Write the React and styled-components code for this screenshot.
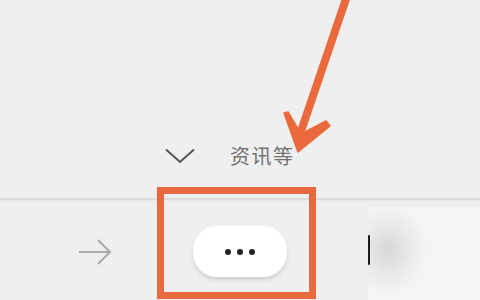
import React from "react";
import styled, { createGlobalStyle } from "styled-components";

const Global = createGlobalStyle`
  html, body { margin: 0; padding: 0; }
  body {
    background: #efefef;
    font-family: "Noto Sans CJK SC", "Noto Sans", sans-serif;
    width: 480px;
    height: 300px;
    overflow: hidden;
  }
`;

const Page = styled.div`
  position: relative;
  width: 480px;
  height: 300px;
  display: flex;
  flex-direction: column;
  background: #efefef;
  overflow: hidden;
`;

const Upper = styled.div`
  height: 198px;
  display: flex;
  flex-direction: column;
  justify-content: flex-end;
  padding-bottom: 31px;
  box-sizing: border-box;
`;

const ExpandRow = styled.div`
  display: flex;
  align-items: center;
  gap: 35px;
  padding-left: 165px;
`;

const Label = styled.span`
  font-size: 20px;
  line-height: 22px;
  color: #727272;
  letter-spacing: 1.5px;
`;

const Divider = styled.div`
  height: 2px;
  background: #dddddd;
  box-shadow: 0 1px 2px rgba(0, 0, 0, 0.04);
`;

const Toolbar = styled.div`
  flex: 1;
  display: flex;
  align-items: center;
  padding-left: 78px;
  padding-top: 3px;
  box-sizing: border-box;
`;

const IconSlot = styled.div`
  display: flex;
  width: 34px;
  height: 32px;
`;

const MoreButton = styled.div`
  margin-left: 81px;
  width: 94px;
  height: 51px;
  border-radius: 24px;
  background: #ffffff;
  box-shadow: 0 3px 4px rgba(0, 0, 0, 0.13);
  display: flex;
  align-items: center;
  justify-content: center;
  gap: 6px;
`;

const Dot = styled.span`
  width: 6px;
  height: 6px;
  border-radius: 50%;
  background: #222;
`;

const SidePanel = styled.div`
  margin-left: auto;
  align-self: stretch;
  margin-top: 4px;
  width: 112px;
  display: flex;
  align-items: center;
  background: radial-gradient(ellipse 40px 45px at 20px 46%, #d6d6d6 0px, #e9e9e9 55%, #f4f4f4 100%), #f4f4f4;
`;

const Cursor = styled.span`
  width: 2px;
  height: 30px;
  margin-top: -8px;
  background: #1a1a1a;
  border-radius: 1px;
`;

const Overlay = styled.svg`
  position: absolute;
  inset: 0;
  pointer-events: none;
`;

const HighlightBox = styled.div`
  position: absolute;
  left: 157px;
  top: 187px;
  width: 159px;
  height: 112px;
  box-sizing: border-box;
  border: 7px solid #e8683f;
  pointer-events: none;
`;

export default function App() {
  return (
    <Page>
      <Global />
      <Upper>
        <ExpandRow>
          <svg width="30" height="16" viewBox="0 0 30 16">
            <polyline points="1,1.5 15,14 29,1.5" fill="none" stroke="#555" strokeWidth="2" />
          </svg>
          <Label>资讯等</Label>
        </ExpandRow>
      </Upper>
      <Divider />
      <Toolbar>
        <IconSlot>
          <svg width="34" height="32" viewBox="0 0 34 32">
            <line x1="1" y1="16" x2="32" y2="16" stroke="#aaa" strokeWidth="2" />
            <polyline points="20,4 32,16 20,28" fill="none" stroke="#aaa" strokeWidth="2" />
          </svg>
        </IconSlot>
        <MoreButton>
          <Dot />
          <Dot />
          <Dot />
        </MoreButton>
        <SidePanel>
          <Cursor />
        </SidePanel>
      </Toolbar>
      <HighlightBox />
      <Overlay width="480" height="300" viewBox="0 0 480 300">
        <line x1="347" y1="-4" x2="298" y2="140" stroke="#ea6a3d" strokeWidth="8" strokeLinecap="round" />
        <polygon
          points="298,152 284,113 288,112 301,134 326,121 330,126"
          fill="#ea6a3d"
          stroke="#ea6a3d"
          strokeWidth="1.5"
          strokeLinejoin="round"
        />
      </Overlay>
    </Page>
  );
}
